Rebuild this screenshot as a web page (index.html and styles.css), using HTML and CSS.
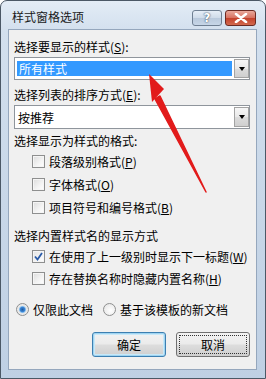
FILE: index.html
```html
<!DOCTYPE html>
<html lang="zh">
<head>
<meta charset="utf-8">
<link rel="stylesheet" href="styles.css">
</head>
<body>
<div class="window">
  <div class="titlebar">
    <span class="title">样式窗格选项</span>
    <div class="tbtns">
      <div class="tbtn help">?</div>
      <div class="tbtn close"><svg width="14" height="10" viewBox="0 0 14 10"><path d="M2 1 L12 9 M12 1 L2 9" stroke="#fff" stroke-width="2.6" stroke-linecap="round"/></svg></div>
    </div>
  </div>
  <div class="panel">
    <div class="label l1">选择要显示的样式(<u>S</u>):</div>
    <div class="combo">
      <div class="combo-val selected">所有样式</div>
      <div class="combo-btn"><span class="tri"></span></div>
    </div>
    <div class="label l2">选择列表的排序方式(<u>E</u>):</div>
    <div class="combo c2">
      <div class="combo-val">按推荐</div>
      <div class="combo-btn"><span class="tri"></span></div>
    </div>
    <div class="label l3">选择显示为样式的格式:</div>
    <div class="chk-row"><span class="chk"></span>段落级别格式(<u>P</u>)</div>
    <div class="chk-row"><span class="chk"></span>字体格式(<u>O</u>)</div>
    <div class="chk-row"><span class="chk"></span>项目符号和编号格式(<u>B</u>)</div>
    <div class="label l4">选择内置样式名的显示方式</div>
    <div class="chk-row r2"><span class="chk on"><svg width="9" height="9" viewBox="0 0 9 9"><path d="M1 4.5 L3.5 7.5 L8 1" fill="none" stroke="#2a5ba8" stroke-width="1.8"/></svg></span>在使用了上一级别时显示下一标题(<u>W</u>)</div>
    <div class="chk-row r2"><span class="chk"></span>存在替换名称时隐藏内置名称(<u>H</u>)</div>
    <div class="radio-row">
      <span class="radio on"></span><span class="rtext">仅限此文档</span>
      <span class="radio"></span><span class="rtext">基于该模板的新文档</span>
    </div>
    <div class="buttons">
      <div class="btn default">确定</div>
      <div class="btn focus"><span>取消</span></div>
    </div>
  </div>
  <svg class="arrow" width="266" height="379" viewBox="0 0 266 379">
    <path d="M206 192 L160 96 L155 99 Z" fill="#e21b1b" stroke="#e21b1b" stroke-width="1.5" stroke-linejoin="round"/>
    <path d="M149 74 L152 102 L164 89 Z" fill="#e21b1b"/>
  </svg>
</div>
</body>
</html>
```
FILE: styles.css
```css
html, body {
  margin: 0;
  padding: 0;
  background: #ffffff;
}
body {
  width: 266px;
  height: 379px;
  overflow: hidden;
  font-family: "Noto Sans CJK SC", "Microsoft YaHei", sans-serif;
  font-size: 12px;
  color: #000;
}
.window {
  position: relative;
  box-sizing: border-box;
  width: 266px;
  height: 379px;
  border: 1px solid #4b5866;
  border-radius: 7px 7px 0 0;
  background: linear-gradient(180deg, #e3ecf6 0px, #d3e0ee 30px, #c8d7e8 200px, #bfd0e4 379px);
  display: flex;
  flex-direction: column;
  padding: 0 8px 8px 7px;
}
.titlebar {
  height: 28px;
  display: flex;
  align-items: flex-start;
  justify-content: space-between;
}
.title {
  margin-left: 4px;
  margin-top: 7px;
  line-height: 18px;
  color: #1a1a1a;
}
.tbtns {
  display: flex;
  gap: 3px;
  margin-top: 9px;
  margin-right: 1px;
}
.tbtn {
  border: 1px solid #6f7f92;
  border-radius: 3px;
  box-sizing: border-box;
  display: flex;
  align-items: center;
  justify-content: center;
}
.help {
  width: 30px;
  height: 16px;
  background: linear-gradient(180deg, #e6eef7 0%, #cfdbe9 50%, #b9c9dc 51%, #c7d6e7 100%);
  color: #fff;
  font-family: "DejaVu Sans", sans-serif;
  font-weight: bold;
  font-size: 12px;
  text-shadow: 0 0 2px #44546a, 0 0 1px #44546a;
}
.close {
  width: 31px;
  height: 16px;
  border-color: #6b2a22;
  background: linear-gradient(180deg, #e9a99c 0%, #d7705f 50%, #c4412b 51%, #d26a4f 100%);
}
.panel {
  flex: 1;
  background: #f0f0f0;
  border: 1px solid #95a7bd;
  padding: 8px 6px 0 5px;
  display: flex;
  flex-direction: column;
}
.label {
  line-height: 18px;
  height: 18px;
}
u { text-decoration: underline; text-underline-offset: 1px; }
.combo {
  margin-top: 1px;
  height: 23px;
  box-sizing: border-box;
  border: 1px solid #8f959c;
  background: #fff;
  display: flex;
  align-items: stretch;
  padding: 1px 0 1px 1px;
}
.combo-val {
  flex: 1;
  display: flex;
  align-items: center;
  padding-left: 2px;
  margin: 2px 2px 2px 1px;
}
.combo-val.selected {
  background: #3399ff;
  color: #fff;
}
.c2 { height: 24px; }
.c2 .combo-val { padding-left: 1px; }
.combo-btn {
  width: 15px;
  box-sizing: border-box;
  border: 1px solid #a3a3a3;
  background: linear-gradient(180deg, #f6f6f6 0%, #e9e9e9 50%, #dcdcdc 51%, #cfcfcf 100%);
  display: flex;
  align-items: center;
  justify-content: center;
}
.tri {
  width: 0;
  height: 0;
  border-left: 3.5px solid transparent;
  border-right: 3.5px solid transparent;
  border-top: 4px solid #000;
}
.l2 { margin-top: 6px; }
.l3 { margin-top: 3px; }
.l4 { margin-top: 8px; }
.chk-row {
  height: 23px;
  display: flex;
  align-items: center;
  padding-left: 18px;
}
.r2 { height: 22px; }
.chk {
  width: 13px;
  height: 13px;
  box-sizing: border-box;
  border: 1px solid #8e8f8f;
  background: linear-gradient(135deg, #dcdcdc 0%, #f4f4f4 60%, #ffffff 100%);
  margin-right: 4px;
  display: flex;
  align-items: center;
  justify-content: center;
  box-shadow: inset 0 0 0 1px #f5f5f5;
}
.chk.on { background: linear-gradient(135deg, #e4e4e4, #fff); }
.radio-row {
  margin-top: 11px;
  height: 18px;
  display: flex;
  align-items: center;
  padding-left: 2px;
}
.radio {
  width: 13px;
  height: 13px;
  box-sizing: border-box;
  border-radius: 50%;
  border: 1px solid #8e8f8f;
  background: radial-gradient(circle at 60% 60%, #ffffff 0%, #e2e2e2 100%);
  margin-right: 4px;
}
.radio.on {
  background: radial-gradient(circle, #1f5aa0 0%, #3d86d4 30%, #88c0f0 40%, #e6e6e6 50%, #f5f5f5 100%);
}
.rtext { margin-right: 10px; }
.buttons {
  margin-top: 14px;
  display: flex;
  justify-content: flex-end;
  gap: 10px;
}
.btn {
  width: 74px;
  height: 25px;
  box-sizing: border-box;
  border: 1px solid #707070;
  border-radius: 3px;
  background: linear-gradient(180deg, #f2f2f2 0%, #ebebeb 48%, #dddddd 52%, #cfcfcf 100%);
  display: flex;
  align-items: center;
  justify-content: center;
}
.btn.default {
  border-color: #3c7fb1;
  box-shadow: inset 0 0 0 1px #9fd4f1, inset 0 0 0 2px #c8e8f8;
}
.btn.focus span {
  display: flex;
  align-items: center;
  justify-content: center;
  width: 66px;
  height: 17px;
  outline: 1px dotted #333;
}
.arrow {
  position: absolute;
  left: -1px;
  top: -1px;
  pointer-events: none;
}
```
